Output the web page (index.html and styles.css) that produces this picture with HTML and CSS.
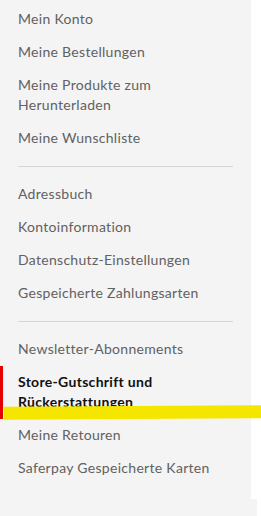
FILE: index.html
```html
<!DOCTYPE html>
<html lang="de">
   <head>
      <meta charset="UTF-8" />
      <meta name="viewport" content="width=device-width, initial-scale=1.0" />
      <title>Mein Konto</title>
      <link rel="stylesheet" href="styles.css">
   </head>
   <body>
      <div class="account-nav">
         <ul class="nav-group">
            <li><a href="#">Mein Konto</a></li>
            <li><a href="#">Meine Bestellungen</a></li>
            <li><a href="#">Meine Produkte zum Herunterladen</a></li>
            <li><a href="#">Meine Wunschliste</a></li>
         </ul>

         <hr class="nav-divider">

         <ul class="nav-group">
            <li><a href="#">Adressbuch</a></li>
            <li><a href="#">Kontoinformation</a></li>
            <li><a href="#">Datenschutz-Einstellungen</a></li>
            <li><a href="#">Gespeicherte Zahlungsarten</a></li>
         </ul>

         <hr class="nav-divider">

         <ul class="nav-group">
            <li><a href="#">Newsletter-Abonnements</a></li>
            <li class="current"><strong>Store-Gutschrift und Rückerstattungen</strong></li>
            <li><a href="#">Meine Retouren</a></li>
            <li><a href="#">Saferpay Gespeicherte Karten</a></li>
         </ul>
      </div>
      <div class="nav-footer"></div>

      <div class="marker"></div>
   </body>
</html>
```

FILE: styles.css
```css
* {
   box-sizing: border-box;
}

body {
   margin: 0;
   background-color: #fff;
   font-family: 'Lato', 'Open Sans', Arial, sans-serif;
   position: relative;
}

.account-nav {
   width: 251px;
   background-color: #f4f4f4;
   padding: 3px 0 14px 0;
}

.nav-group {
   list-style: none;
   margin: 0;
   padding: 0;
}

.nav-group li {
   padding: 6px 20px 7px 18px;
   font-size: 14px;
   line-height: 20px;
   letter-spacing: 0.3px;
}

.nav-group a {
   text-decoration: none;
   color: #616161;
}

.nav-group li.current {
   border-left: 3px solid #e60000;
   padding-left: 15px;
}

.nav-group li.current strong {
   color: #111;
   font-weight: bold;
}

.nav-divider {
   margin: 11px 18px;
   border: 0;
   border-top: 1px solid #d6d6d6;
}

.nav-footer {
   width: 257px;
   height: 19px;
   background-color: #f4f4f4;
}

.marker {
   position: absolute;
   left: 4px;
   top: 406px;
   width: 257px;
   height: 13px;
   background-color: #f5e600;
   transform: rotate(-0.35deg);
}
```
